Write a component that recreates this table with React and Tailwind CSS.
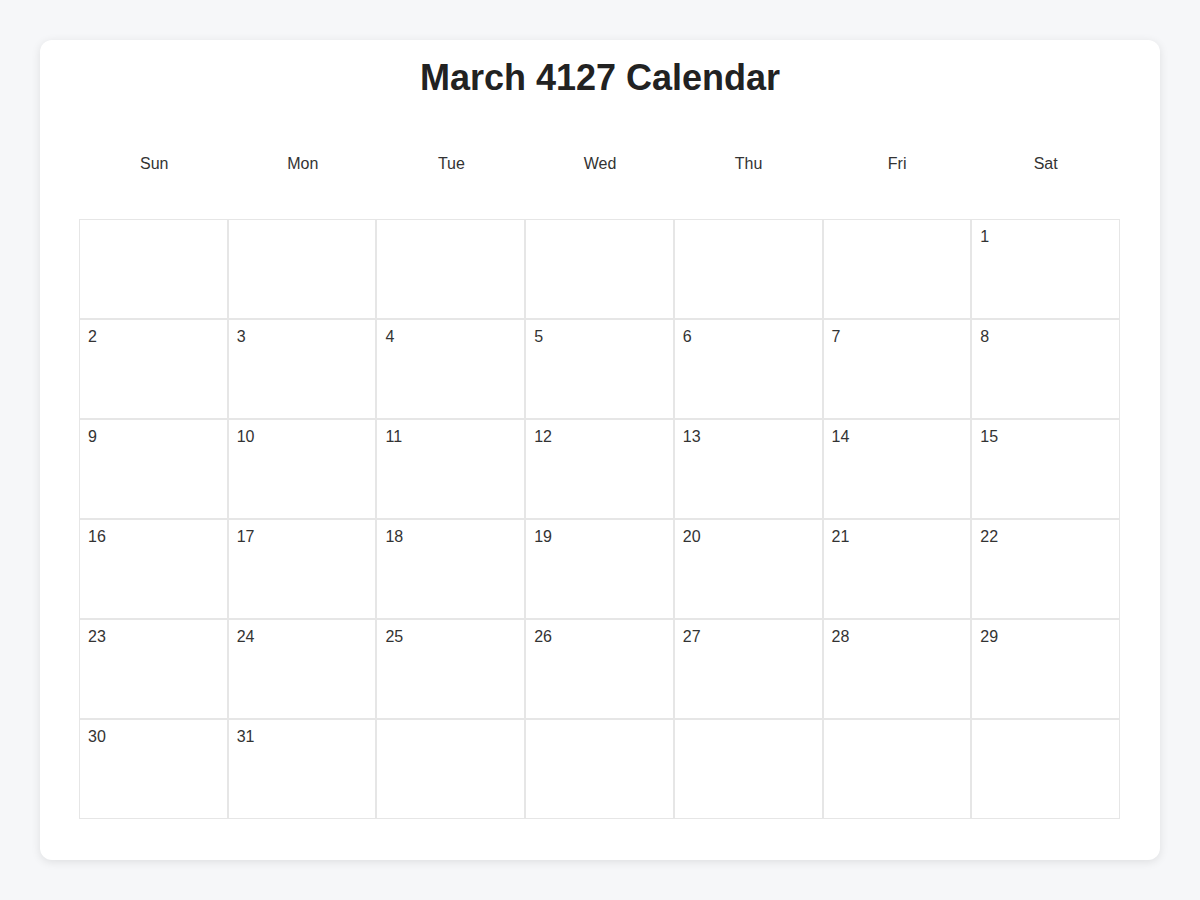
import React from 'react';

const days = ['Sun', 'Mon', 'Tue', 'Wed', 'Thu', 'Fri', 'Sat'];

// March 4127 starts on a Saturday
const buildCells = () => {
  const cells = [];
  for (let i = 0; i < 6; i++) cells.push(null);
  for (let d = 1; d <= 31; d++) cells.push(d);
  while (cells.length < 42) cells.push(null);
  return cells;
};

export default function App() {
  const cells = buildCells();

  return (
    <div className="min-h-[900px] bg-[#f6f7f9] p-10 font-['Liberation_Sans',Arial,sans-serif]">
      <div className="h-[820px] bg-white rounded-xl shadow-[0_2px_10px_rgba(0,0,0,0.1)] px-10 pt-[18px]">
        <h1 className="text-center text-[36px] leading-[40px] font-bold text-[#222]">
          March 4127 Calendar
        </h1>

        <div className="grid grid-cols-7 mt-[54px]">
          {days.map((day) => (
            <div key={day} className="text-center text-base leading-6 text-[#333]">
              {day}
            </div>
          ))}
        </div>

        <div className="grid grid-cols-7 mt-[43px] -ml-px">
          {cells.map((n, i) => (
            <div
              key={i}
              className="h-[100px] border border-[#e6e6e6] px-[8px] pt-[8px] text-base leading-[18px] text-[#333]"
            >
              {n}
            </div>
          ))}
        </div>
      </div>
    </div>
  );
}
